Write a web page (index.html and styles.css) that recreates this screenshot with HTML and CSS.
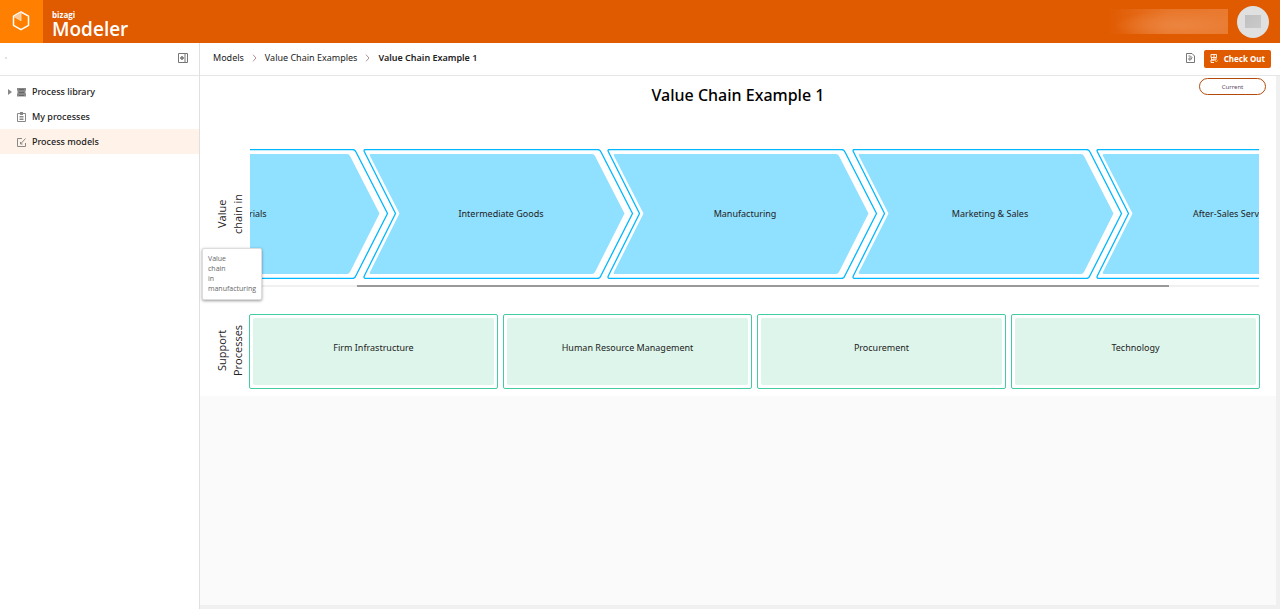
FILE: index.html
```html
<!DOCTYPE html>
<html lang="en">
<head>
<meta charset="utf-8">
<title>Bizagi Modeler</title>
<link rel="stylesheet" href="styles.css">
</head>
<body>
<svg class="defs" aria-hidden="true">
  <symbol id="chevron" viewBox="0 0 272 130">
    <path class="chevron-line" d="M3 .5H234.500Q237 .5 238 3L269.500 64.500L238 126.500Q237 129.500 234.500 129.500H3Q0 129.500 1.500 126.500L32.500 64.500L1.500 3Q0 .5 3 .5Z"/>
    <path class="chevron-fill" d="M8 5H229Q231 5 232 7L261.500 64.500L232 123Q231 125 229 125H8Q6 125 7 123L36.500 64.500L7 7Q6 5 8 5Z"/>
  </symbol>
  <symbol id="crumb" viewBox="0 0 5 8"><path d="M1 .7L4 4L1 7.300" fill="none" stroke="#b08f93"/></symbol>
</svg>
<header class="header">
  <a class="logo" href="#" aria-label="Home">
    <svg width="18" height="20" viewBox="0 0 18 20"><path d="M9 1L16.500 5.200V14.300L9 18.700L1.500 14.300V5.200Z" fill="none" stroke="#fff" stroke-width="1.500" stroke-linejoin="round"/><path d="M2 5.500L9 1.200V9.700Z" fill="#ffc794"/><path d="M9 1V9.700L2 5.500" fill="none" stroke="#ffe3c7" stroke-width=".8"/></svg>
  </a>
  <div class="brand"><span class="brand-company">bizagi</span><span class="brand-product">Modeler</span></div>
  <div class="account"><div class="account-name"></div><button class="avatar" aria-label="Account"><span></span></button></div>
</header>
<div class="body">
  <aside class="sidebar">
    <div class="sidebar-top"><span class="dot"></span>
      <button class="icon-button" aria-label="Collapse panel"><svg width="10" height="10" viewBox="0 0 10 10"><path d="M.5 .5H9.500V9.500H.5ZM7 .5V9.500" fill="none" stroke="#777"/><path d="M2 5H6M4 3V7" stroke="#777" stroke-width="1.500"/></svg></button>
    </div>
    <nav class="menu">
      <a href="#"><i class="arrow"></i><svg width="9" height="10" viewBox="0 0 9 10"><path d="M0 1H9V3.500H0ZM.5 3.500H8.500V6.500H.5ZM0 6.500H9V9.500H0Z" fill="#888"/><path d="M2 2.500H7M2 5.500H7M2 8.500H7" stroke="#666"/></svg>Process library</a>
      <a href="#"><i></i><svg width="9" height="10" viewBox="0 0 9 10"><path d="M.5 1.500H8.500V9.500H.5ZM2.500 4.500H6.500M2.500 6H6.500M2.500 7.500H6.500" fill="none" stroke="#888"/><path d="M3 0H6V3H3Z" fill="#888"/></svg>My processes</a>
      <a href="#" class="active" aria-current="page"><i></i><svg width="9" height="10" viewBox="0 0 9 10"><path d="M5 1.500H.5V9.500H8.500V6M3.500 7L8.500 1.500M3.500 5V7H5.500" fill="none" stroke="#888"/></svg>Process models</a>
    </nav>
  </aside>
  <div class="content">
    <div class="toolbar">
      <nav class="crumbs" aria-label="Breadcrumb">
        <a href="#">Models</a><svg width="5" height="8"><use href="#crumb"/></svg>
        <a href="#">Value Chain Examples</a><svg width="5" height="8"><use href="#crumb"/></svg>
        <a href="#" class="current" aria-current="page">Value Chain Example 1</a>
      </nav>
      <button class="icon-button" aria-label="Revisions"><svg width="9" height="10" viewBox="0 0 9 10"><path d="M.5 .5H6L8.500 3V9.500H.5Z" fill="none" stroke="#777"/><path d="M2.500 3H4.500L6 4.700L4.500 7H3V5H5" fill="none" stroke="#777"/></svg></button>
      <button class="checkout"><svg width="8" height="9" viewBox="0 0 8 9"><path d="M1 .5H6.500V3.500H1ZM1.500 3.500V6H6V3.500M1 8.500V6H4M1 8.500H4M3 2H5M3 5H5" fill="none" stroke="#fff" stroke-width=".9"/><path d="M5 6.500L6.300 8L8 6.200" fill="none" stroke="#ffe45c" stroke-width=".8"/></svg>Check Out</button>
    </div>
    <div class="viewport">
      <main class="diagram">
        <div class="diagram-head"><h1>Value Chain Example 1</h1><button class="version">Current</button></div>
        <section class="row value-row">
          <h2>Value<br>chain in</h2>
          <div class="scroller">
            <ul class="chain">
              <li class="first"><svg><use href="#chevron"/></svg><span>Raw Materials</span></li>
              <li><svg><use href="#chevron"/></svg><span>Intermediate Goods</span></li>
              <li><svg><use href="#chevron"/></svg><span>Manufacturing</span></li>
              <li><svg><use href="#chevron"/></svg><span>Marketing &amp; Sales</span></li>
              <li><svg><use href="#chevron"/></svg><span>After-Sales Services</span></li>
            </ul>
            <div class="track"><div class="thumb"></div></div>
          </div>
          <div class="tooltip" role="tooltip">Value<br>chain<br>in<br>manufacturing</div>
        </section>
        <section class="row support-row">
          <h2>Support<br>Processes</h2>
          <ul class="support">
            <li><span>Firm Infrastructure</span></li>
            <li><span>Human Resource Management</span></li>
            <li><span>Procurement</span></li>
            <li><span>Technology</span></li>
          </ul>
        </section>
      </main>
    </div>
  </div>
</div>
</body>
</html>
```

FILE: styles.css
```css
* { box-sizing: border-box; }
body {
  margin: 0;
  min-height: 100vh;
  display: flex;
  flex-direction: column;
  font: 9px/12px "Noto Sans", "Open Sans", sans-serif;
  color: #222;
  background: #fff;
}
ul { list-style: none; margin: 0; padding: 0; }
h1, h2 { margin: 0; font-weight: 400; }
a { color: inherit; text-decoration: none; }
button { font: inherit; padding: 0; border: 0; background: none; cursor: pointer; }
svg { display: block; flex: none; }
.defs { position: absolute; width: 0; height: 0; }

.header { display: flex; height: 43px; background: #e05a00; color: #fff; }
.logo { width: 43px; display: grid; place-items: center; padding: 0 2px 2px 0; background: #ff8000; }
.brand { display: flex; flex-direction: column; padding: 11px 0 0 9px; font-family: "Open Sans", sans-serif; }
.brand-company { font-size: 8px; line-height: 8px; font-weight: 700; }
.brand-product { font-size: 19px; line-height: 20px; font-weight: 600; }
.account { margin-left: auto; display: flex; align-items: center; gap: 9px; padding-right: 11px; }
.account-name {
  width: 120px;
  height: 25px;
  background:
    radial-gradient(ellipse at 60% 65%, #ec8540 0, transparent 65%),
    linear-gradient(90deg, #e05a00, #e8762a 50%, #e97a30);
}
.avatar { width: 32px; height: 32px; border-radius: 50%; background: #e0e0e0; display: grid; place-items: center; }
.avatar span { width: 16px; height: 13px; background: linear-gradient(135deg, #c0c0c0, #cacaca); }

.body { flex: 1; display: flex; }
.sidebar { width: 200px; flex: none; border-right: 1px solid #e0e0e0; }
.sidebar-top {
  height: 33px;
  display: flex;
  align-items: center;
  justify-content: space-between;
  padding: 0 11px 2px 5px;
  border-bottom: 1px solid #e6e6e6;
}
.dot { width: 2px; height: 2px; background: #e0e0e0; }
.icon-button { display: grid; place-items: center; }
.menu { padding-top: 3px; }
.menu a { height: 25px; display: flex; align-items: center; padding-left: 8px; font-weight: 500; color: #222; }
.menu i { width: 9px; }
.menu svg { margin-right: 6px; }
.menu .arrow::before {
  content: "";
  display: block;
  width: 0;
  border: 3px solid transparent;
  border-left: 4px solid #888;
  border-right: 0;
}
.menu .active { background: #fff2e9; }

.content { flex: 1; min-width: 0; display: flex; flex-direction: column; }
.toolbar { height: 33px; display: flex; align-items: center; padding: 0 9px 2px 13px; border-bottom: 1px solid #e6e6e6; }
.crumbs { flex: 1; display: flex; align-items: center; gap: 8px; }
.crumbs .current { font-weight: 600; }
.checkout {
  height: 18px;
  display: flex;
  align-items: center;
  gap: 6px;
  margin: 1px 0 0 9px;
  padding: 0 6px;
  border-radius: 2px;
  background: #e05a00;
  color: #fff;
  font-weight: 700;
  font-size: 8px;
}
.viewport { flex: 1; background: #fafafa; border: solid #f0f0f0; border-width: 0 4px 4px 0; }
.diagram { background: #fff; padding-bottom: 7px; }
.diagram-head { display: grid; grid-template-columns: 1fr auto 1fr; padding: 2px 10px 0; }
.diagram-head h1 {
  grid-column: 2;
  font-size: 16px;
  line-height: 34px;
  font-weight: 500;
  color: #000;
}
.version {
  justify-self: end;
  width: 67px;
  height: 17px;
  border: 1px solid #b34a0b;
  border-radius: 9px;
  font-size: 6px;
  line-height: 12px;
  color: #5a4c66;
}

.row { position: relative; display: flex; padding: 0 16px 0 14px; }
.row h2 {
  width: 32px;
  writing-mode: vertical-rl;
  transform: rotate(180deg);
  font-family: "Open Sans", sans-serif;
  font-size: 11px;
  line-height: 16px;
  font-weight: 500;
  text-align: center;
}
.value-row { margin-top: 37px; }
.value-row h2 { height: 130px; }
.scroller { flex: 1; min-width: 0; overflow: hidden; margin: 0 1px 0 4px; }
.chain { display: flex; margin-left: -132px; }
.chain li { flex: none; width: 272px; margin-right: -27px; display: grid; }
.chain li:nth-child(even) { margin-right: -28px; }
.chain svg, .chain span { grid-area: 1 / 1; }
.chain svg { width: 272px; height: 130px; }
.chain span { place-self: center; padding-left: 4px; }
.chain .first span { padding: 0 34px 0 0; }
.chevron-line { fill: #fff; stroke: #00b8ff; stroke-width: 1.3; }
.chevron-fill { fill: #90e0ff; }
.track { height: 2px; margin-top: 6px; background: #f0f0f0; }
.thumb { width: 80.5%; height: 2px; margin-left: 10.6%; background: #999; }
.tooltip {
  position: absolute;
  left: 2px;
  top: 99px;
  padding: 5px;
  border: 1px solid #ddd;
  border-radius: 2px;
  background: #fff;
  box-shadow: 0 1px 3px rgba(0, 0, 0, .4);
  font-family: "Open Sans", sans-serif;
  font-size: 7px;
  line-height: 10px;
  color: #666;
}
.support-row { margin-top: 27px; }
.support-row h2 { padding-top: 3px; }
.support { flex: 1; display: grid; grid-template-columns: repeat(4, 1fr); gap: 5px; margin-left: 3px; }
.support li { height: 75px; padding: 3px; border: 1px solid #43cba2; border-radius: 2px; }
.support span { height: 100%; display: grid; place-items: center; padding-bottom: 7px; border-radius: 2px; background: #def5eb; }
```
